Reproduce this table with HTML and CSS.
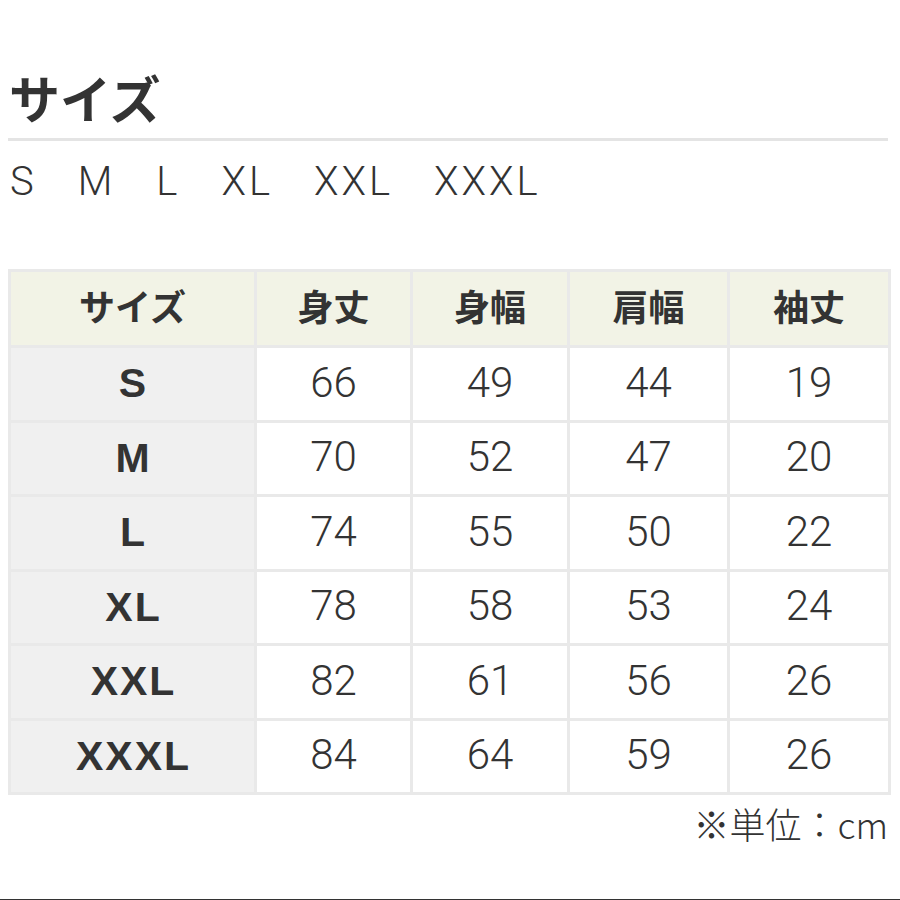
FILE: index.html
```html
<!DOCTYPE html>
<html lang="ja">
<head>
<meta charset="utf-8">
<link rel="stylesheet" href="styles.css">
</head>
<body>
<div class="page">
  <h1 class="title">サイズ</h1>
  <div class="sizes">
    <span>S</span><span>M</span><span>L</span><span>XL</span><span>XXL</span><span>XXXL</span>
  </div>
  <table class="chart">
    <colgroup>
      <col class="c1"><col class="c2"><col class="c3"><col class="c4"><col class="c5">
    </colgroup>
    <thead>
      <tr><th>サイズ</th><th>身丈</th><th>身幅</th><th>肩幅</th><th>袖丈</th></tr>
    </thead>
    <tbody>
      <tr><th>S</th><td>66</td><td>49</td><td>44</td><td>19</td></tr>
      <tr><th>M</th><td>70</td><td>52</td><td>47</td><td>20</td></tr>
      <tr><th>L</th><td>74</td><td>55</td><td>50</td><td>22</td></tr>
      <tr><th>XL</th><td>78</td><td>58</td><td>53</td><td>24</td></tr>
      <tr><th>XXL</th><td>82</td><td>61</td><td>56</td><td>26</td></tr>
      <tr><th>XXXL</th><td>84</td><td>64</td><td>59</td><td>26</td></tr>
    </tbody>
  </table>
  <p class="unit">※単位：cm</p>
</div>
</body>
</html>
```

FILE: styles.css
```css
html, body {
  margin: 0;
  padding: 0;
  background: #ffffff;
}

.page {
  width: 900px;
  height: 900px;
  box-sizing: border-box;
  padding: 67px 12px 0 8px;
  border-bottom: 1px solid #333;
  color: #333;
  font-family: "Noto Sans CJK JP", "Noto Sans", sans-serif;
}

.title {
  margin: 0;
  padding: 0 0 11px 1px;
  font-size: 51px;
  line-height: 60px;
  font-weight: 700;
  border-bottom: 3px solid #e4e4e4;
}

.sizes {
  display: flex;
  gap: 41px;
  margin-top: 17px;
  padding-left: 2px;
  font-family: "Roboto", "Liberation Sans", sans-serif;
  font-weight: 300;
  font-size: 40px;
  line-height: 48px;
  letter-spacing: 3px;
}

.chart {
  margin-top: 63px;
  width: 880px;
  border-collapse: collapse;
  border: 3px solid #e9e9e9;
  table-layout: fixed;
}

.c1 { width: 246px; }
.c2 { width: 156px; }
.c3 { width: 157px; }
.c4 { width: 160px; }
.c5 { width: 161px; }

.chart th,
.chart td {
  border: 3px solid #e9e9e9;
  text-align: center;
  padding: 0;
}

.chart thead th {
  height: 76px;
  box-sizing: border-box;
  padding-bottom: 8px;
  background: #f2f3e6;
  font-family: "Noto Sans CJK JP", sans-serif;
  font-weight: 700;
  font-size: 36px;
}

.chart tbody th,
.chart tbody td {
  height: 74.5px;
  box-sizing: border-box;
}

.chart tbody th {
  background: #f0f0f0;
  font-family: "Liberation Sans", Arial, sans-serif;
  font-weight: 700;
  font-size: 41px;
  letter-spacing: 2px;
  padding-left: 2px;
}

.chart tbody td {
  background: #ffffff;
  font-family: "Roboto", "Liberation Sans", sans-serif;
  font-weight: 300;
  font-size: 42px;
  padding-bottom: 3px;
}

.unit {
  margin: 8px 0 0 0;
  text-align: right;
  font-family: "Noto Sans CJK JP", sans-serif;
  font-weight: 300;
  font-size: 36px;
  line-height: 40px;
}
```
